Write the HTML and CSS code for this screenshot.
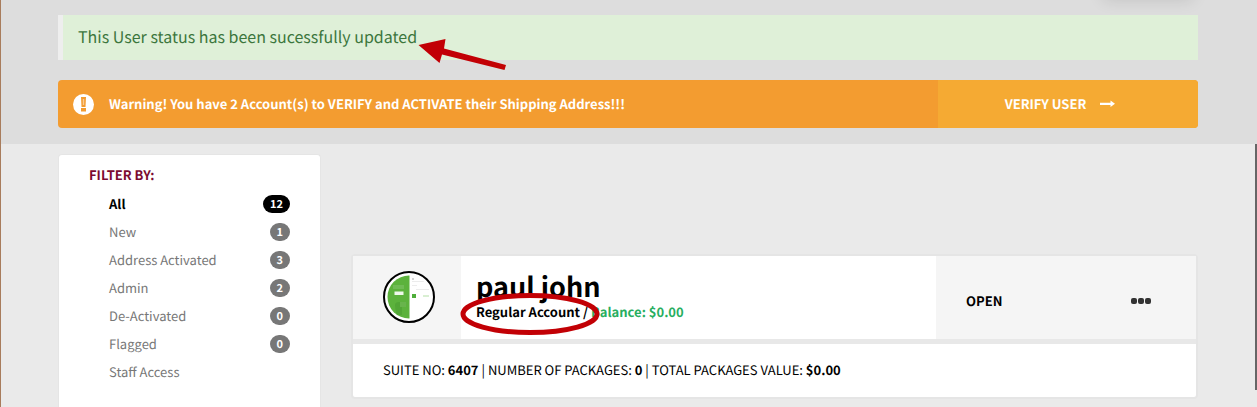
FILE: index.html
```html
<!DOCTYPE html>
<html lang="en">
<head>
<meta charset="utf-8">
<title>User accounts</title>
<link rel="stylesheet" href="styles.css">
</head>
<body>
<header class="notices">
  <div class="menu-shadow"></div>
  <div class="status" role="status">
    <p class="status-text">This User status has been sucessfully updated</p>
    <svg class="arrow" viewBox="0 0 90 34" aria-hidden="true"><path d="M0.500 7L27.500 1L26 10.500L88 27L86.500 32L24 16.500L21.500 25Z" fill="#c20005"/></svg>
  </div>
  <div class="warning" role="alert">
    <div class="warning-body">
      <svg class="warning-icon" viewBox="0 0 21 21" aria-hidden="true"><circle cx="10.500" cy="10.500" r="10.500" fill="#fff"/><path d="M8 3h5l-.5 10h-4zM8 14h5v3.500H8z" fill="#f39c30"/><path d="M9.800 5h1.400v6H9.800z" fill="#f9cb94"/></svg>
      <p>Warning! You have 2 Account(s) to VERIFY and ACTIVATE their Shipping Address!!!</p>
    </div>
    <a class="verify" href="#verify">VERIFY USER
      <svg class="verify-icon" viewBox="0 0 15 8" aria-hidden="true"><path d="M0 2.700H10.500V.5L15 3.800L10.500 7V5H0Z" fill="#fff"/></svg>
    </a>
  </div>
</header>
<main class="content">
  <nav class="filters" aria-labelledby="filter-title">
    <h2 class="filter-title" id="filter-title">FILTER BY:</h2>
    <ul class="filter-list">
      <li><a class="filter active" href="#all">All<span class="badge">12</span></a></li>
      <li><a class="filter" href="#new">New<span class="badge">1</span></a></li>
      <li><a class="filter" href="#address">Address Activated<span class="badge">3</span></a></li>
      <li><a class="filter" href="#admin">Admin<span class="badge">2</span></a></li>
      <li><a class="filter" href="#deactivated">De-Activated<span class="badge">0</span></a></li>
      <li><a class="filter" href="#flagged">Flagged<span class="badge">0</span></a></li>
      <li><a class="filter" href="#staff">Staff Access</a></li>
    </ul>
  </nav>
  <article class="user">
    <div class="user-head">
      <div class="user-photo">
        <svg class="avatar" viewBox="0 0 52 52" role="img" aria-label="paul john">
          <defs><clipPath id="disc"><circle cx="26" cy="26" r="21.500"/></clipPath></defs>
          <circle cx="26" cy="26" r="25" fill="#fff" stroke="#000" stroke-width="2"/>
          <g clip-path="url(#disc)">
            <path fill="#5cb23c" d="M4 4h22.500v44H4z"/>
            <path fill="#70bb55" d="M10 14h11v4H10z"/>
            <path fill="#eef8ea" d="M11.500 20.500h9v3.500h-9z"/>
            <path fill="#52a636" d="M12 34q0-3 4-3h3v13h-5q-2-4-2-10z"/>
            <path fill="#68b44c" d="M17 31h6v5h-6z"/>
            <path fill="#d5d5d5" d="M29 7h2v2h-2z"/>
            <path fill="#ececec" d="M29 10h14v1H29zM29 14h5v1h-5zM33 18h14v1H33z"/>
            <path fill="#4fae3a" d="M29 23h4v4h-4z"/>
            <path fill="#d9efd2" d="M40 24h6v2h-6z"/>
          </g>
        </svg>
      </div>
      <div class="user-info">
        <h1 class="user-name">paul john</h1>
        <p class="account">Regular Account / <span class="balance">Balance: $0.00</span></p>
        <svg class="ring" viewBox="0 0 140 44" aria-hidden="true"><ellipse cx="70" cy="22" rx="67" ry="18.500" fill="none" stroke="#c20005" stroke-width="5"/></svg>
      </div>
      <div class="user-actions">
        <a class="open" href="#open">OPEN</a>
        <button class="more" type="button" aria-label="More options">
          <svg class="more-icon" viewBox="0 0 20 6" aria-hidden="true"><g fill="#333"><rect width="6" height="6" y="0" rx="2"/><rect x="7" width="6" height="6" rx="2"/><rect x="14" width="6" height="6" rx="2"/></g></svg>
        </button>
      </div>
    </div>
    <p class="user-summary">SUITE NO: <b>6407</b> | NUMBER OF PACKAGES: <b>0</b> | TOTAL PACKAGES VALUE: <b>$0.00</b></p>
  </article>
</main>
<div class="scrollbar" aria-hidden="true"></div>
</body>
</html>
```
FILE: styles.css
```css
* {
  box-sizing: border-box;
}

body {
  min-height: 100vh;
  margin: 0;
  border-left: 1px solid #a87c5c;
  background: #eaeaea;
  color: #000;
  font-family: "Noto Sans CJK SC", "Source Sans Pro", sans-serif;
  font-size: 13px;
  line-height: 20px;
  text-rendering: geometricPrecision;
  display: flex;
  flex-direction: column;
}

h1, h2, p, ul {
  margin: 0;
  padding: 0;
}

a {
  color: inherit;
  text-decoration: none;
}

svg {
  display: block;
}

.notices {
  position: relative;
  display: flex;
  flex-direction: column;
  gap: 20px;
  padding: 15px 59px 16px 57px;
  background: #ddd;
}

.menu-shadow {
  position: absolute;
  top: -20px;
  right: 64px;
  width: 90px;
  height: 16px;
  box-shadow: 0 4px 16px rgba(0, 0, 0, 0.12);
}

.status {
  position: relative;
  padding: 9px 15px 11px;
  border-left: 5px solid #eee;
  background: #dff0d8;
  color: #3c763d;
  font-size: 16px;
  line-height: 25px;
}

.arrow {
  position: absolute;
  top: 23px;
  left: 355px;
  width: 90px;
  height: 34px;
}

.warning {
  display: flex;
  min-height: 48px;
  overflow: hidden;
  border-radius: 4px;
  background: #f39c30;
  color: #fff;
  font-weight: 700;
}

.warning-body {
  flex: 1;
  display: flex;
  align-items: center;
  gap: 15px;
  padding: 0 15px;
}

.warning-icon {
  width: 21px;
  height: 21px;
}

.verify {
  width: 260px;
  display: flex;
  align-items: center;
  justify-content: center;
  gap: 14px;
  padding-right: 16px;
  background: #f5aa33;
}

.verify-icon {
  width: 15px;
  height: 8px;
}

.content {
  flex: 1;
  display: flex;
  align-items: stretch;
  gap: 30px;
  padding: 10px 59px 0 57px;
}

.filters {
  width: 263px;
  padding: 10px 30px;
  border: 1px solid #e5e5e5;
  border-bottom: 0;
  border-radius: 4px 4px 0 0;
  background: #fff;
}

.filter-title {
  margin-bottom: 5px;
  color: #7b0a30;
  font-size: 13px;
  line-height: 20px;
}

.filter-list {
  padding-left: 20px;
  list-style: none;
}

.filter {
  display: flex;
  align-items: center;
  justify-content: space-between;
  height: 28px;
  color: #777;
}

.filter.active {
  color: #000;
  font-weight: 700;
}

.badge {
  min-width: 20px;
  padding: 0 7px;
  border-radius: 10px;
  background: #777;
  color: #fff;
  font-size: 11px;
  font-weight: 700;
  line-height: 18px;
  text-align: center;
}

.active .badge {
  background: #000;
}

.user {
  flex: 1;
  align-self: flex-start;
  margin-top: 100px;
  border: 2px solid #e5e5e5;
  border-radius: 4px;
  background: #fff;
}

.user-head {
  display: flex;
  min-height: 88px;
  border-bottom: 5px solid #e8e8e8;
}

.user-photo {
  padding: 15px 26px 15px 30px;
  background: #f5f5f5;
}

.avatar {
  width: 52px;
  height: 52px;
}

.user-info {
  position: relative;
  flex: 1;
  padding: 14px 15px;
}

.user-name {
  font-size: 27px;
  line-height: 32px;
}

.account {
  font-weight: 700;
  line-height: 20px;
}

.balance {
  color: #27ae60;
}

.ring {
  position: absolute;
  top: 36px;
  left: -1px;
  width: 140px;
  height: 44px;
}

.user-actions {
  width: 260px;
  display: flex;
  align-items: center;
  justify-content: space-between;
  padding: 6px 45px 0 30px;
  background: #f5f5f5;
  font-weight: 700;
}

.more {
  padding: 0;
  border: 0;
  background: none;
}

.more-icon {
  width: 20px;
  height: 6px;
}

.user-summary {
  padding: 16px 30px 17px;
}

.scrollbar {
  position: fixed;
  top: 144px;
  right: 0;
  width: 2px;
  height: 246px;
  background: #666;
}
```
